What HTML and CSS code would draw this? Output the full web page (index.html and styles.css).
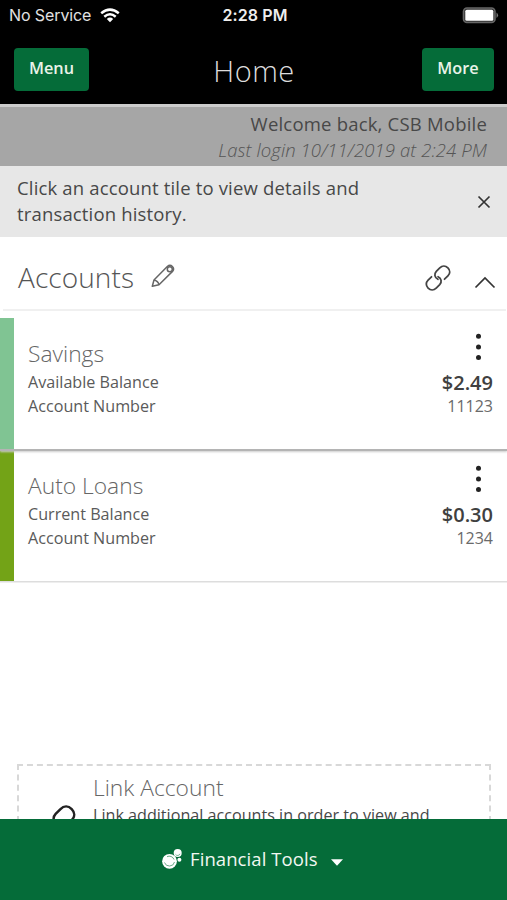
FILE: index.html
```html
<!DOCTYPE html>
<html lang="en">
<head>
<meta charset="utf-8">
<title>Home</title>
<link rel="stylesheet" href="styles.css">
</head>
<body>
<div class="app">
  <header class="top">
    <div class="status">
      <div class="carrier"><span class="service">No Service</span>
        <svg class="wifi" width="20" height="15" viewBox="0 0 20 15"><g fill="none" stroke="#fff" stroke-width="2.5"><path d="M1.2 5.3Q10-2.1 18.8 5.3"/><path d="M4.3 8.7Q10 3.9 15.7 8.7"/></g><path d="M6.8 11Q10 8.2 13.2 11L10 14.3Z" fill="#fff"/></svg>
      </div>
      <span class="clock">2:28 PM</span>
      <svg class="battery" width="37" height="17" viewBox="0 0 37 17"><rect x="1.500" y="1" width="31.500" height="14.500" rx="3.500" fill="#333" stroke="#666" stroke-width="1.6"/><rect x="3.300" y="2.800" width="28" height="11" rx="1.500" fill="#fff"/><path d="M34.500 5.500Q37.600 8.200 34.500 11Z" fill="#777"/></svg>
    </div>
    <nav class="bar">
      <button class="btn menu"><span>Menu</span></button>
      <h1>Home</h1>
      <button class="btn more"><span>More</span></button>
    </nav>
  </header>
  <section class="welcome">
    <p class="hello"><span>Welcome back, CSB Mobile</span></p>
    <p class="login"><span>Last login 10/11/2019 at 2:24 PM</span></p>
  </section>
  <section class="notice">
    <p>Click an account tile to view details and<br>transaction history.</p>
    <svg width="14" height="14" viewBox="0 0 14 14"><path d="M1.500 1.500l11 11M12.500 1.500l-11 11" stroke="#333" stroke-width="1.7" fill="none"/></svg>
  </section>
  <main>
    <div class="heading">
      <h2>Accounts</h2>
      <svg class="pencil" width="24" height="24" viewBox="0 0 24 24" fill="none" stroke="#666" stroke-width="1.500" stroke-linejoin="round"><path d="M1.300 22.300L3 16L16.300 2.500Q19 .2 21.400 2.500Q23.700 4.900 21.500 7.400L8 20.700Z"/><path d="M3 16Q7 16.800 8 20.700"/><circle cx="18.800" cy="5.200" r="2.500"/></svg>
      <svg class="chain" width="26" height="26" viewBox="0 0 26 26" fill="none" stroke="#444" stroke-width="1.800" stroke-linecap="round"><path d="M12.900 14.300C9.500 12.500 8.900 9 11.300 6.400L14.800 2.900C17.200.5 20.500.5 22.900 2.900C25.300 5.300 25.300 8.500 22.900 10.900L19.500 14.200"/><path d="M13.100 11.700C16.500 13.500 17.100 17 14.700 19.600L11.200 23.100C8.800 25.500 5.500 25.500 3.100 23.100C.7 20.700.7 17.500 3.100 15.100L6.500 11.800"/></svg>
      <svg class="chevron" width="22" height="13" viewBox="0 0 22 13"><path d="M1.500 11.500L11 2L20.500 11.500" fill="none" stroke="#333" stroke-width="1.700"/></svg>
    </div>
    <article class="tile savings">
      <div class="names"><h3>Savings</h3><p>Available Balance</p><p>Account Number</p></div>
      <div class="values">
        <svg class="dots" width="8" height="28" viewBox="0 0 8 28" fill="#222"><circle cx="4.500" cy="3.200" r="2.500"/><circle cx="4.500" cy="13.900" r="2.500"/><circle cx="4.500" cy="24.600" r="2.500"/></svg>
        <strong>$2.49</strong><p class="num">11123</p>
      </div>
    </article>
    <article class="tile loans">
      <div class="names"><h3>Auto Loans</h3><p>Current Balance</p><p>Account Number</p></div>
      <div class="values">
        <svg class="dots" width="8" height="28" viewBox="0 0 8 28" fill="#222"><circle cx="4.500" cy="3.200" r="2.500"/><circle cx="4.500" cy="13.900" r="2.500"/><circle cx="4.500" cy="24.600" r="2.500"/></svg>
        <strong>$0.30</strong><p class="num">1234</p>
      </div>
    </article>
    <div class="link-box">
      <svg class="link-icon" viewBox="0 0 26 26" fill="none" stroke="#222" stroke-width="1.800" stroke-linecap="round"><path d="M12.900 14.300C9.500 12.500 8.900 9 11.300 6.400L14.800 2.900C17.200.5 20.500.5 22.900 2.900C25.300 5.300 25.300 8.500 22.900 10.900L19.500 14.200"/><path d="M13.100 11.700C16.500 13.500 17.100 17 14.700 19.600L11.200 23.100C8.800 25.500 5.500 25.500 3.100 23.100C.7 20.700.7 17.500 3.100 15.100L6.500 11.800"/></svg>
      <div><h3>Link Account</h3><p>Link additional accounts in order to view and</p></div>
    </div>
  </main>
  <footer>
    <svg class="coins" width="20" height="20" viewBox="0 0 20 20"><circle cx="7.500" cy="12.300" r="7.400" fill="#fff"/><path d="M2.500 13.500A5.200 5.200 0 0 0 12.500 13M5 7.700A5 5 0 0 1 12 10.500" fill="none" stroke="#5c9f7c" stroke-width=".9"/><circle cx="15.700" cy="4.100" r="4" fill="#fff"/><path d="M13.500 5.300A2.500 2.500 0 0 0 18 4.800" fill="none" stroke="#5c9f7c" stroke-width=".8"/><circle cx="17.400" cy="10.800" r="2" fill="#fff"/></svg>
    <span>Financial Tools</span>
    <svg class="caret" width="12" height="7" viewBox="0 0 12 7"><path d="M0 .3H12L6 6.700Z" fill="#fff"/></svg>
  </footer>
</div>
</body>
</html>
```
FILE: styles.css
```css
* { box-sizing: border-box; }
body, h1, h2, h3, p { margin: 0; }
body { background: #fff; font-family: "Open Sans", sans-serif; color: #484848; }
svg { display: block; flex: none; }
.app { width: 507px; height: 900px; display: flex; flex-direction: column; overflow: hidden; white-space: nowrap; }
.top { height: 107px; flex: none; background: #000; border-bottom: 3px solid #ccc; color: #fff; }
.status { height: 30px; display: grid; grid-template-columns: 1fr auto 1fr; align-items: center; padding: 0 8px 0 9px; font: 16px/30px Inter, sans-serif; }
.carrier { display: flex; align-items: center; gap: 9px; color: #e2e2e2; }
.service { letter-spacing: -.1px; }
.clock { font-weight: 600; color: #eee; letter-spacing: .1px; position: relative; left: 1px; }
.battery { justify-self: end; }
.bar { height: 74px; display: grid; grid-template-columns: 1fr auto 1fr; padding: 18px 13px 0 14px; }
.btn { height: 43px; border: 0; border-radius: 4px; background: #056c39; color: #e9f3e8; font: 600 16.3px/40px "Open Sans", sans-serif; padding: 0 0 3px; }
.menu { width: 75px; }
.more { width: 72px; justify-self: end; }
h1, h2, h3 { font-weight: 300; }
h1 { font-size: 29px; line-height: 45px; color: #ddd; letter-spacing: .5px; }
.welcome { height: 59px; flex: none; background: #a6a6a6; padding: 4px 20px 0 0; text-align: right; }
.hello { font-size: 18.500px; line-height: 26px; letter-spacing: .2px; }
.login { font-size: 18.500px; font-style: italic; font-weight: 300; line-height: 26px; color: #555; letter-spacing: .1px; }
.notice { height: 71px; flex: none; background: #e7e7e7; padding: 9px 16px 0 17px; display: flex; justify-content: space-between; }
.notice p { font-size: 18.500px; line-height: 26px; letter-spacing: .16px; }
.notice svg { margin-top: 20px; }
main { flex: 1; overflow: hidden; }
.heading { height: 74px; margin: 0 1px 7px 3px; border-bottom: 2px solid #f0f0f0; display: flex; padding: 0 10px 0 15px; }
h2 { font-size: 28px; line-height: 80px; color: #555; letter-spacing: .1px; }
.pencil { margin: 27px 0 0 17px; }
.chain { margin: 28px 23px 0 auto; }
.chevron { margin-top: 39px; }
.tile { height: 132px; border-left: 14px solid #80c493; padding: 0 14px; display: flex; justify-content: space-between; }
.savings { height: 131px; margin-bottom: 2px; box-shadow: 0 2px 0 #b4b4b4, 0 3px 2px #ccc; position: relative; }
.loans { height: 130px; border-left-color: #73a317; box-shadow: 0 1.500px 0 #ddd; }
.names { padding-top: 19px; }
.loans .names { padding-top: 18px; }
h3 { font-size: 22.800px; line-height: 33px; color: #666; }
.names p, .num { font-size: 16.150px; line-height: 24px; color: #5a5a5a; }
.values { display: flex; flex-direction: column; align-items: flex-end; padding-top: 15px; }
.loans .values { padding-top: 14px; }
.dots { margin-right: 11px; }
.values strong { font-size: 20px; font-weight: 600; line-height: 22px; margin-top: 11px; color: #404040; }
.values .num { font-size: 16px; color: #6a6a6a; }
.link-box { height: 110px; margin: 183px 16px 0 17px; border: 2px dashed #d8d8d8; display: flex; padding: 5px 0 0 22px; }
.link-icon { margin-top: 34px; margin-left: -1px; width: 36px; height: 36px; }
.link-box > div { margin-left: 17px; }
.link-box p { font-size: 16.150px; line-height: 22px; }
footer { height: 81px; flex: none; background: #056c39; color: #f2f8f2; display: flex; padding-left: 162px; font-size: 18.500px; line-height: 80px; }
footer span { letter-spacing: .08px; }
.coins { margin: 30px 8px 0 0; }
.caret { margin: 40px 0 0 13px; }
```
